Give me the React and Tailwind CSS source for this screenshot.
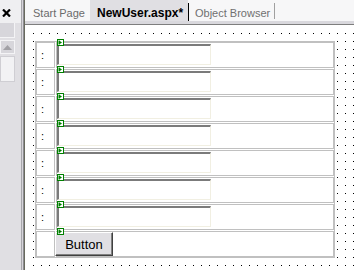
import React from "react";

const rows = [0, 1, 2, 3, 4, 5, 6];

function Marker() {
  return (
    <svg className="absolute left-0 top-[-4px] z-10" width="7" height="7" viewBox="0 0 7 7">
      <rect x="0.5" y="0.5" width="6" height="6" fill="#ffffff" stroke="#008000" />
      <path d="M2 1.5 L5 3.5 L2 5.5 Z" fill="#008000" />
      <rect x="1.5" y="1.5" width="1" height="4" fill="#008000" />
    </svg>
  );
}

function LeftPanel() {
  return (
    <div className="flex w-[21px] shrink-0 flex-col bg-[#e0dfe3]">
      <div className="flex h-[23px] items-start bg-[#efeff1] pl-[2px] pt-[9px]">
        <svg width="9" height="8" viewBox="0 0 9 8">
          <path d="M1 0.5 L8 7.5 M8 0.5 L1 7.5" stroke="#000" strokeWidth="2.2" />
        </svg>
      </div>
      <div className="h-[15px] w-[15px] border-b border-r border-[#f4f4f6] bg-[#d7d6db]" />
      <div className="mt-[2px] flex h-[14px] w-[15px] items-center justify-center border border-[#f4f4f6] bg-[#d7d6db]">
        <svg width="9" height="5" viewBox="0 0 9 5">
          <path d="M0 5 L4.5 0 L9 5 Z" fill="#a2a1a6" />
        </svg>
      </div>
      <div className="mt-[2px] h-[26px] w-[15px] border border-[#cfced3] bg-[#f2f2f4]" />
    </div>
  );
}

function Splitter() {
  return (
    <div className="flex shrink-0">
      <div className="w-[1px] bg-[#a8a7ac]" />
      <div className="w-[1px] bg-[#d6d5da]" />
      <div className="w-[1px] bg-[#8e8d92]" />
      <div className="w-[1px] bg-[#686a5e]" />
    </div>
  );
}

function Tabs() {
  return (
    <div className="flex h-[21px] shrink-0 bg-[#f7f7f8] text-[11px]">
      <div className="w-[65px] pl-[8px] pt-[6px] leading-[14px] text-[#6b6b6b]">Start Page</div>
      <div className="w-[98px] bg-[#e0dfe3] pl-[7px] pt-[6px] text-[12px] font-bold leading-[14px] text-black">
        NewUser.aspx*
      </div>
      <div className="mt-[3px] h-[19px] w-[1px] bg-black" />
      <div className="w-[85px] pl-[6px] pt-[6px] leading-[14px] text-[#707070]">Object Browser</div>
      <div className="mt-[3px] h-[16px] w-[1px] bg-[#a0a0a0]" />
    </div>
  );
}

function TextBox() {
  return (
    <div className="mt-[1px] h-[21px] w-[154px] border-b border-l-2 border-r border-t-2 border-b-[#f1efe2] border-l-[#7b7b7b] border-r-[#f1efe2] border-t-[#7b7b7b] bg-white" />
  );
}

function Row({ children, colon }) {
  return (
    <div className="flex gap-[1px]">
      <div className="h-[26px] w-[19px] border border-[#c0c0c0] pl-[4px] pt-[7px] text-[11px] leading-[11px] text-black">
        {colon ? ":" : ""}
      </div>
      <div className="relative h-[26px] flex-1 border border-[#c0c0c0]">
        <Marker />
        {children}
      </div>
    </div>
  );
}

export default function App() {
  return (
    <div className="flex h-[270px] w-[354px] overflow-hidden bg-white font-['Liberation_Sans',Arial,sans-serif]">
      <LeftPanel />
      <Splitter />
      <div className="flex min-w-0 flex-1 flex-col">
        <Tabs />
        <div className="h-[3px] shrink-0 bg-[#d9d8dd]" />
        <div className="h-[1px] shrink-0 bg-[#7e7e7e]" />
        <div className="flex-1 border-l border-t border-white bg-white bg-[image:linear-gradient(to_bottom,transparent_1px,white_1px),linear-gradient(to_right,black_1px,transparent_1px)] bg-[length:8px_8px] bg-[position:-1px_-1px] pl-[9px] pt-[15px]">
          <div className="flex w-[300px] flex-col gap-[1px] border border-[#c0c0c0] bg-white">
            {rows.map((r) => (
              <Row key={r} colon>
                <TextBox />
              </Row>
            ))}
            <Row>
              <button className="-ml-[2px] flex h-[24px] w-[58px] items-center justify-center border-b border-l border-r border-t border-b-[#404040] border-l-white border-r-[#404040] border-t-white bg-[#e0dfe3] pt-[1px] text-[13px] leading-none text-black shadow-[inset_-1px_-1px_0_#808080]">
                Button
              </button>
            </Row>
          </div>
        </div>
      </div>
    </div>
  );
}
